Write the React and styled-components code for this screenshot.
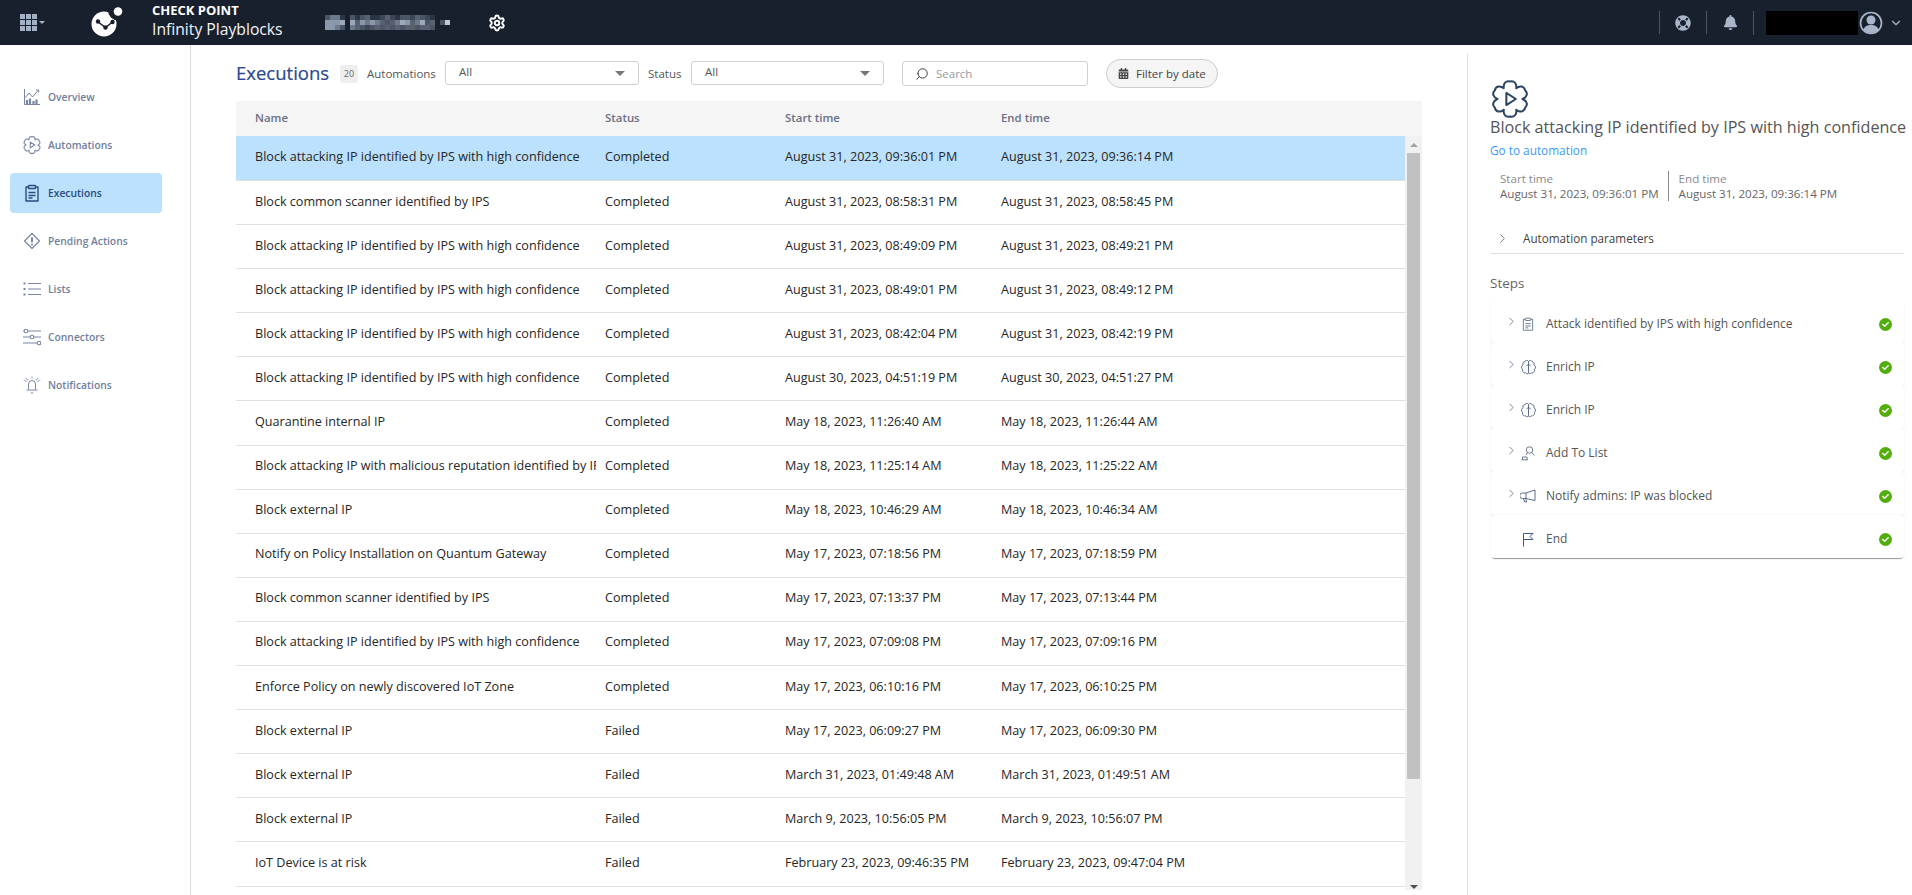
import React from 'react'
import styled, { createGlobalStyle } from 'styled-components'
import { Settings, ChevronRight, ChevronDown, Search } from 'lucide-react'
import { FaBell, FaLifeRing, FaCalendarAlt, FaCheck } from 'react-icons/fa'

const rows = [
  ['Block attacking IP identified by IPS with high confidence', 'Completed', 'August 31, 2023, 09:36:01 PM', 'August 31, 2023, 09:36:14 PM'],
  ['Block common scanner identified by IPS', 'Completed', 'August 31, 2023, 08:58:31 PM', 'August 31, 2023, 08:58:45 PM'],
  ['Block attacking IP identified by IPS with high confidence', 'Completed', 'August 31, 2023, 08:49:09 PM', 'August 31, 2023, 08:49:21 PM'],
  ['Block attacking IP identified by IPS with high confidence', 'Completed', 'August 31, 2023, 08:49:01 PM', 'August 31, 2023, 08:49:12 PM'],
  ['Block attacking IP identified by IPS with high confidence', 'Completed', 'August 31, 2023, 08:42:04 PM', 'August 31, 2023, 08:42:19 PM'],
  ['Block attacking IP identified by IPS with high confidence', 'Completed', 'August 30, 2023, 04:51:19 PM', 'August 30, 2023, 04:51:27 PM'],
  ['Quarantine internal IP', 'Completed', 'May 18, 2023, 11:26:40 AM', 'May 18, 2023, 11:26:44 AM'],
  ['Block attacking IP with malicious reputation identified by IPS', 'Completed', 'May 18, 2023, 11:25:14 AM', 'May 18, 2023, 11:25:22 AM'],
  ['Block external IP', 'Completed', 'May 18, 2023, 10:46:29 AM', 'May 18, 2023, 10:46:34 AM'],
  ['Notify on Policy Installation on Quantum Gateway', 'Completed', 'May 17, 2023, 07:18:56 PM', 'May 17, 2023, 07:18:59 PM'],
  ['Block common scanner identified by IPS', 'Completed', 'May 17, 2023, 07:13:37 PM', 'May 17, 2023, 07:13:44 PM'],
  ['Block attacking IP identified by IPS with high confidence', 'Completed', 'May 17, 2023, 07:09:08 PM', 'May 17, 2023, 07:09:16 PM'],
  ['Enforce Policy on newly discovered IoT Zone', 'Completed', 'May 17, 2023, 06:10:16 PM', 'May 17, 2023, 06:10:25 PM'],
  ['Block external IP', 'Failed', 'May 17, 2023, 06:09:27 PM', 'May 17, 2023, 06:09:30 PM'],
  ['Block external IP', 'Failed', 'March 31, 2023, 01:49:48 AM', 'March 31, 2023, 01:49:51 AM'],
  ['Block external IP', 'Failed', 'March 9, 2023, 10:56:05 PM', 'March 9, 2023, 10:56:07 PM'],
  ['IoT Device is at risk', 'Failed', 'February 23, 2023, 09:46:35 PM', 'February 23, 2023, 09:47:04 PM'],
]

// censored account name in the top bar
const mosaicPalette = { '.': 'transparent', 1: '#2a3546', 2: '#4a5568', 3: '#6c7a8c', 4: '#8b98ab', 5: '#a0a8b8', 6: '#59606e', 7: '#3c4656', 8: '#c4c8cc' }
const mosaicRows = [
  '2331.21261176712276271....',
  '4445.56434362635463526.28.',
  '4432.36272626262662662....',
]

function gearPath(cx, cy, outer, inner) {
  let d = ''
  for (let i = 0; i < 6; i++) {
    let a = (i * 60 - 90) * Math.PI / 180
    let p = (r, t) => `${(cx + r * Math.cos(t)).toFixed(2)} ${(cy + r * Math.sin(t)).toFixed(2)}`
    let s = Math.PI / 6
    if (i === 0) d += `M${p(inner, a - s)}`
    d += `C${p(outer * 0.98, a - s * 0.8)} ${p(outer * 1.1, a - s * 0.4)} ${p(outer, a)}`
    d += `C${p(outer * 1.1, a + s * 0.4)} ${p(outer * 0.98, a + s * 0.8)} ${p(inner, a + s)}`
  }
  return d + 'Z'
}

const GearPlay = ({ size = 18, color = '#7a86a3', width = 1.5 }) => (
  <svg width={size} height={size} viewBox="0 0 24 24" fill="none" stroke={color} strokeWidth={width} strokeLinejoin="round">
    <path d={gearPath(12, 12, 11, 7.9)} />
    <path d="M9.7 8.2v7.6l6-3.8z" />
  </svg>
)

const Chart = () => (
  <svg width="18" height="18" viewBox="0 0 18 18" fill="none" stroke="#7a86a3" strokeWidth="1">
    <path d="M1.5 1v15.5h15.5" />
    <path d="M2.5 9.5 6 5l3.5 4 6-7M13 2h2.7v2.6" />
    <path d="M4 16V12M7 16v-5.5M10.5 16v-3M13.5 16v-4.5" strokeWidth="2.2" />
  </svg>
)

const Clipboard = ({ size = 18, color = '#2c4a80', width = 1.4 }) => (
  <svg width={size} height={size} viewBox="0 0 18 18" fill="none" stroke={color} strokeWidth={width} strokeLinejoin="round">
    <path d="M5.5 3H3v14h12V3h-2.500" />
    <rect x="5.500" y="1.500" width="7" height="3" rx=".6" />
    <path d="M5.500 8.500h7M5.500 11.500h7M5.500 14h4" />
  </svg>
)

const Diamond = () => (
  <svg width="18" height="18" viewBox="0 0 18 18" fill="none" stroke="#7a86a3" strokeWidth="1.2" strokeLinejoin="round">
    <path d="M9 1.500 16.500 9 9 16.500 1.500 9z" />
    <path d="M9 5.200v5" strokeWidth="2" />
    <circle cx="9" cy="12.600" r="1" fill="#7a86a3" stroke="none" />
  </svg>
)

const ListIcon = () => (
  <svg width="18" height="18" viewBox="0 0 18 18" fill="none" stroke="#7a86a3" strokeWidth="1.2">
    <path d="M5 3.500h13M5 9h13M5 14.500h13" />
    <path d="M.5 3.500h2M.5 9h2M.5 14.500h2" strokeWidth="2" strokeDasharray="2 0" />
  </svg>
)

const Sliders = () => (
  <svg width="18" height="18" viewBox="0 0 18 18" fill="none" stroke="#7a86a3" strokeWidth="1.100">
    <path d="M5 3h13M0 9h7M10 9h8M0 15h14" />
    <circle cx="3" cy="3" r="1.800" />
    <circle cx="9" cy="9" r="1.800" />
    <circle cx="16" cy="15" r="1.800" />
    <path d="M0 3h1" />
  </svg>
)

const Siren = () => (
  <svg width="18" height="18" viewBox="0 0 18 18" fill="none" stroke="#7a86a3" strokeWidth="1">
    <path d="M5.500 13.500V8a3.500 3.500 0 0 1 7 0v5.500M3.500 14h11M8 16.500l1 .8 1-.8" />
    <path d="M1 3.500 3.500 6M2.800 1.800l2 2.700M17 3.500 14.500 6M15.200 1.800l-2 2.700M9 .5v2" strokeWidth=".9" />
  </svg>
)

const Brain = () => (
  <svg width="17" height="17" viewBox="0 0 16 16" fill="none" stroke="#4d5f80" strokeWidth=".85" strokeLinejoin="round">
    <path d="M8 2.300C7.200 1 5 1 4.600 2.600 3 2.500 2.200 4.200 3 5.400 1.200 6 .8 8.700 2.400 9.600 1.800 11.500 3.500 13.800 5.500 13 6.500 14.300 7.700 14 8 13c.3 1 1.500 1.300 2.500 0 2 .8 3.700-1.500 3.100-3.400 1.600-.9 1.200-3.600-.6-4.200.8-1.200 0-2.900-1.600-2.800C11 1 8.800 1 8 2.300z" />
    <path d="M8 2.300V13M6 6.800 8 4.800l2 2" />
  </svg>
)

const Gavel = () => (
  <svg width="16" height="16" viewBox="0 0 16 16" fill="none" stroke="#5d6c88" strokeWidth=".9">
    <circle cx="9.500" cy="5" r="3.200" />
    <path d="M7.500 7.600 6 10M11.600 7.300 14.500 10.500M1.500 14.800h6.500M2.500 14.800v-2.800h4.500v2.800" />
  </svg>
)

const Megaphone = () => (
  <svg width="16" height="16" viewBox="0 0 16 16" fill="none" stroke="#4d5f80" strokeWidth=".9" strokeLinejoin="round">
    <path d="M15 2v10.500L6 10.500V5z" />
    <path d="M6 5H2.500a2.700 2.700 0 0 0 0 5.500H6M3.500 10.700l1.200 3.300h2l-1-3.400" />
  </svg>
)

const Flag = () => (
  <svg width="16" height="16" viewBox="0 0 16 16" fill="none" stroke="#3d5a8c" strokeWidth="1">
    <path d="M3.500 15.500V2.500h9.500L10 5.500l3 3H3.500" />
  </svg>
)

const Logo = () => (
  <svg width="36" height="30" viewBox="0 0 36 30">
    <circle cx="14" cy="17" r="12.500" fill="#fff" />
    <circle cx="28" cy="3.500" r="10" fill="#18202e" />
    <circle cx="28" cy="4.500" r="4.300" fill="#fff" />
    <path d="M7.500 14.500 15.500 20.500 22.500 15" stroke="#18202e" strokeWidth="1.500" fill="none" />
    <circle cx="8" cy="14.500" r="2.200" fill="#18202e" />
    <circle cx="15.500" cy="20.500" r="2.200" fill="#18202e" />
    <circle cx="22.500" cy="15" r="2.200" fill="#18202e" />
  </svg>
)

const Avatar = () => (
  <svg width="24" height="24" viewBox="0 0 24 24" fill="none">
    <circle cx="12" cy="12" r="10.500" stroke="#a9b6c9" strokeWidth="1.700" />
    <circle cx="12" cy="9" r="4.500" fill="#a9b6c9" />
    <path d="M4.500 18.500c1.500-3.500 4-4.500 7.500-4.500s6 1 7.500 4.500A10 10 0 0 1 12 22a10 10 0 0 1-7.500-3.500z" fill="#a9b6c9" />
  </svg>
)

const navItems = [
  ['Overview', <Chart />],
  ['Automations', <GearPlay />],
  ['Executions', <Clipboard />, true],
  ['Pending Actions', <Diamond />],
  ['Lists', <ListIcon />],
  ['Connectors', <Sliders />],
  ['Notifications', <Siren />],
]

const stepIconClipboard = <Clipboard size={14} color="#5d6c88" width={1.1} />
const steps = [
  ['Attack identified by IPS with high confidence', stepIconClipboard, true],
  ['Enrich IP', <Brain />, true],
  ['Enrich IP', <Brain />, true],
  ['Add To List', <Gavel />, true],
  ['Notify admins: IP was blocked', <Megaphone />, true],
  ['End', <Flag />, false],
]

export default function App() {
  return (
    <Page>
      <GlobalStyle />
      <TopBar>
        <AppGrid>
          <Dots>
            {Array.from({ length: 9 }).map((_, i) => <i key={i} />)}
          </Dots>
          <Caret />
        </AppGrid>
        <LogoSlot><Logo /></LogoSlot>
        <Brand>
          <b>CHECK POINT</b>
          <span>Infinity Playblocks</span>
        </Brand>
        <Mosaic>
          {mosaicRows.map((r, y) => r.split('').map((c, x) => <MosaicCell key={`${y}-${x}`} $c={mosaicPalette[c]} />))}
        </Mosaic>
        <GearSlot><Settings size={18} strokeWidth={2.6} color="#fff" /></GearSlot>
        <TopRight>
          <TopIcon><FaLifeRing size={16} /></TopIcon>
          <TopIcon><FaBell size={15} /></TopIcon>
          <Redacted />
          <AvatarSlot><Avatar /></AvatarSlot>
          <ChevronDown size={14} color="#a9b6c9" />
        </TopRight>
      </TopBar>

      <Body>
        <Sidebar>
          {navItems.map(([label, icon, active]) => (
            <NavItem key={label} $active={active}>
              <NavIcon>{icon}</NavIcon>
              {label}
            </NavItem>
          ))}
        </Sidebar>

        <Main>
          <Toolbar>
            <Title>Executions</Title>
            <Count>20</Count>
            <FilterLabel $w={87}>Automations</FilterLabel>
            <Select $w={194}>All<Arrow /></Select>
            <FilterLabel $w={52}>Status</FilterLabel>
            <Select $w={193}>All<Arrow /></Select>
            <SearchBox>
              <Search size={14} color="#333" strokeWidth={1.6} style={{ transform: 'scaleX(-1)' }} />
              Search
            </SearchBox>
            <DateButton><FaCalendarAlt size={11} color="#444" />Filter by date</DateButton>
          </Toolbar>

          <Table>
            <HeadRow>
              <NameHead>Name</NameHead>
              <span>Status</span>
              <span>Start time</span>
              <span>End time</span>
            </HeadRow>
            <TableBody>
              <RowList>
                {rows.map((r, i) => (
                  <Row key={i} $selected={i === 0}>
                    <NameCell>{r[0]}</NameCell>
                    <span>{r[1]}</span>
                    <span>{r[2]}</span>
                    <span>{r[3]}</span>
                  </Row>
                ))}
              </RowList>
              <ScrollBar>
                <ScrollArrow $dir="up" />
                <Thumb />
                <ScrollArrow $dir="down" />
              </ScrollBar>
            </TableBody>
          </Table>
        </Main>

        <Details>
          <GearIconSlot><GearPlay size={38} color="#2d4563" width={1.3} /></GearIconSlot>
          <DetailTitle>Block attacking IP identified by IPS with high confidence</DetailTitle>
          <GoLink>Go to automation</GoLink>
          <Times>
            <TimeCol>
              <small>Start time</small>
              August 31, 2023, 09:36:01 PM
            </TimeCol>
            <TimeCol $last>
              <small>End time</small>
              August 31, 2023, 09:36:14 PM
            </TimeCol>
          </Times>
          <Params>
            <ChevronRight size={15} color="#6b7694" strokeWidth={1.5} />
            Automation parameters
          </Params>
          <StepsLabel>Steps</StepsLabel>
          <StepList>
            {steps.map(([label, icon, expandable], i) => (
              <Step key={i}>
                <StepChevron>{expandable && <ChevronRight size={15} color="#5d6c88" strokeWidth={1.5} />}</StepChevron>
                <StepIcon>{icon}</StepIcon>
                <StepText>{label}</StepText>
                <Check><FaCheck size={7} color="#fff" /></Check>
              </Step>
            ))}
          </StepList>
        </Details>
      </Body>
    </Page>
  )
}

let GlobalStyle = createGlobalStyle`
  html, body { margin: 0; padding: 0; height: 100%; background: #fff; }
  body { font-family: "Open Sans", "Liberation Sans", sans-serif; overflow: hidden; }
  * { box-sizing: border-box; }
`
let Page = styled.div`
  display: flex;
  flex-direction: column;
  height: 895px;
  overflow: hidden;
`
let TopBar = styled.div`
  height: 45px;
  flex: none;
  background: #18202e;
  display: flex;
  align-items: center;
  color: #fff;
`
let AppGrid = styled.div`
  display: flex;
  margin-left: 20px;
  width: 70px;
  align-items: center;
  gap: 2px;
`
let Dots = styled.div`
  display: grid;
  grid-template-columns: repeat(3, 4.500px);
  grid-auto-rows: 4.500px;
  gap: 1.500px;
  i { background: #a3b1c6; }
`
let Caret = styled.div`
  width: 0;
  height: 0;
  border-left: 3px solid transparent;
  border-right: 3px solid transparent;
  border-top: 3px solid #a3b1c6;
`
let LogoSlot = styled.div`
  width: 62px;
  height: 30px;
  margin-top: -2px;
`
let Brand = styled.div`
  width: 173px;
  margin-bottom: 6px;
  display: flex;
  flex-direction: column;
  line-height: 19px;
  white-space: nowrap;
  b { font-size: 13px; font-weight: 700; }
  span { font-size: 15.700px; color: #f2f4f7; }
`
let Mosaic = styled.div`
  display: grid;
  grid-template-columns: repeat(26, 5px);
  grid-auto-rows: 5px;
  width: 130px;
`
let MosaicCell = styled.i`
  background: ${p => p.$c};
`
let GearSlot = styled.div`
  margin-left: 33px;
  display: flex;
`
let TopRight = styled.div`
  margin-left: auto;
  display: flex;
  align-items: center;
  padding-right: 9px;
  color: #a9b6c9;
`
let TopIcon = styled.div`
  width: 47px;
  height: 23px;
  border-left: 1px solid #4a5465;
  display: flex;
  align-items: center;
  justify-content: center;
`
let Redacted = styled.div`
  width: 105px;
  height: 24px;
  border-left: 1px solid #4a5465;
  padding-left: 12px;
  background: #000;
  background-clip: content-box;
`
let AvatarSlot = styled.div`
  display: flex;
  margin: 0 6px 0 1px;
`
let Body = styled.div`
  flex: 1;
  display: flex;
  min-height: 0;
`
let Sidebar = styled.nav`
  width: 191px;
  flex: none;
  border-right: 1px solid #ddd;
  padding: 32px 0 0 10px;
  display: flex;
  flex-direction: column;
  gap: 8px;
`
let NavItem = styled.div`
  width: 152px;
  height: 40px;
  border-radius: 4px;
  display: flex;
  align-items: center;
  gap: 7px;
  padding-left: 12px;
  font-size: 10.300px;
  font-weight: 600;
  background: ${p => (p.$active ? '#bbe1fd' : 'transparent')};
  color: ${p => (p.$active ? '#2c4a80' : '#727e9c')};
`
let NavIcon = styled.span`
  width: 19px;
  display: flex;
  justify-content: center;
`
let Main = styled.main`
  width: 1276px;
  flex: none;
  padding: 0 45px;
  display: flex;
  flex-direction: column;
`
let Toolbar = styled.div`
  height: 56px;
  flex: none;
  display: flex;
  align-items: center;
  padding-top: 1px;
`
let Title = styled.h1`
  margin: -2px 0 0 0;
  width: 104px;
  font-size: 18.500px;
  font-weight: 400;
  color: #2a4a8e;
  -webkit-text-stroke: 0.2px #2a4a8e;
`
let Count = styled.span`
  width: 18px;
  height: 18px;
  background: #eee;
  border-radius: 3px;
  font-size: 9px;
  color: #666;
  display: flex;
  align-items: center;
  justify-content: center;
`
let FilterLabel = styled.span`
  width: ${p => p.$w}px;
  padding-left: 9px;
  font-size: 11.500px;
  color: #555;
`
let Select = styled.div`
  width: ${p => p.$w}px;
  height: 24px;
  margin-top: -1px;
  border: 1px solid #d0d0d0;
  border-radius: 3px;
  padding: 0 13px;
  display: flex;
  align-items: center;
  justify-content: space-between;
  font-size: 11.500px;
  color: #555;
  padding-bottom: 3px;
`
let Arrow = styled.i`
  width: 0;
  height: 0;
  margin-top: 4px;
  border-left: 5px solid transparent;
  border-right: 5px solid transparent;
  border-top: 5px solid #777;
`
let SearchBox = styled.div`
  width: 186px;
  height: 25px;
  margin-left: 18px;
  border: 1px solid #d0d0d0;
  border-radius: 3px;
  padding-left: 12px;
  display: flex;
  align-items: center;
  gap: 7px;
  font-size: 11.500px;
  color: #999;
`
let DateButton = styled.button`
  width: 112px;
  height: 29px;
  margin-left: 18px;
  border: 1px solid #ccc;
  border-radius: 15px;
  background: #f5f5f5;
  padding: 0 0 0 11px;
  display: flex;
  align-items: center;
  gap: 7px;
  font-family: inherit;
  font-size: 11.500px;
  color: #444;
  white-space: nowrap;
`
let Table = styled.section`
  flex: 1;
  display: flex;
  flex-direction: column;
  min-height: 0;
  margin-bottom: 5px;
`
let HeadRow = styled.div`
  height: 35px;
  flex: none;
  padding-bottom: 2px;
  background: #f5f5f5;
  display: grid;
  grid-template-columns: 369px 180px 216px 1fr;
  align-items: center;
  font-size: 11.400px;
  font-weight: 600;
  color: #6b6f85;
`
let NameHead = styled.span`
  padding-left: 19px;
`
let TableBody = styled.div`
  flex: 1;
  display: flex;
  min-height: 0;
`
let RowList = styled.div`
  flex: 1;
  overflow: hidden;
`
let Row = styled.div`
  height: ${p => (p.$selected ? 45 : 44.100)}px;
  padding-bottom: 3px;
  display: grid;
  grid-template-columns: 369px 180px 216px 1fr;
  align-items: center;
  border-bottom: 1px solid #e0e0e0;
  background: ${p => (p.$selected ? '#bbe1fd' : '#fff')};
  font-size: 12.600px;
  color: #262626;
  white-space: nowrap;
`
let NameCell = styled.span`
  margin: 0 9px 0 19px;
  overflow: hidden;
`
let ScrollBar = styled.div`
  width: 17px;
  flex: none;
  background: #f1f1f1;
  display: flex;
  flex-direction: column;
  align-items: center;
  padding-top: 7px;
`
let ScrollArrow = styled.i`
  width: 0;
  height: 0;
  border-left: 4px solid transparent;
  border-right: 4px solid transparent;
  ${p => (p.$dir === 'up'
    ? 'border-bottom: 4px solid #a3a3a3; margin-bottom: 6px;'
    : 'border-top: 4px solid #505050; margin-top: auto; margin-bottom: 1px;')}
`
let Thumb = styled.div`
  width: 13px;
  height: 626px;
  background: #c1c1c1;
`
let Details = styled.aside`
  flex: 1;
  min-width: 0;
  margin-top: 9px;
  border-left: 1px solid #ddd;
  padding: 26px 8px 0 22px;
  display: flex;
  flex-direction: column;
  align-items: stretch;
`
let GearIconSlot = styled.div`
  padding-left: 1px;
  height: 38px;
`
let DetailTitle = styled.div`
  margin-top: -2px;
  font-size: 16.150px;
  line-height: 22px;
  color: #555;
  white-space: nowrap;
`
let GoLink = styled.a`
  margin-top: 4px;
  font-size: 11.800px;
  line-height: 16px;
  color: #3b99fc;
`
let Times = styled.div`
  margin-top: 13px;
  display: flex;
  padding-left: 10px;
`
let TimeCol = styled.div`
  font-size: 11.600px;
  line-height: 15px;
  color: #666;
  white-space: nowrap;
  small { display: block; font-size: 11.600px; color: #8a8a8a; }
  ${p => (p.$last ? 'padding-left: 10px;' : 'padding-right: 9px; border-right: 1px solid #888;')}
`
let Params = styled.div`
  margin: 22px 0 0 1px;
  height: 31px;
  padding: 0 0 0 4px;
  display: flex;
  align-items: center;
  gap: 13px;
  border-bottom: 1px solid #ddd;
  font-size: 11.700px;
  color: #444;
`
let StepsLabel = styled.div`
  margin-top: 19px;
  font-size: 13.500px;
  line-height: 20px;
  color: #666;
`
let StepList = styled.div`
  margin: 7px 0 0 1px;
  display: flex;
  flex-direction: column;
`
let Step = styled.div`
  height: 43px;
  display: flex;
  align-items: center;
  padding: 0 12px 0 14px;
  background: #fff;
  border-radius: 4px;
  box-shadow: 0 1px 2px rgba(0, 0, 0, .1);
  &:last-child { box-shadow: 0 2px 1px -1px rgba(0, 0, 0, .4), 0 0 2px rgba(0, 0, 0, .08); }
`
let StepChevron = styled.span`
  width: 13px;
  height: 15px;
  display: flex;
`
let StepIcon = styled.span`
  width: 20px;
  margin-top: 5px;
  display: flex;
  justify-content: center;
`
let StepText = styled.span`
  margin: 3px 0 0 8px;
  flex: 1;
  font-size: 12px;
  color: #555;
`
let Check = styled.span`
  width: 13px;
  height: 13px;
  margin-top: 5px;
  border-radius: 50%;
  background: #52ae0c;
  display: flex;
  align-items: center;
  justify-content: center;
`
